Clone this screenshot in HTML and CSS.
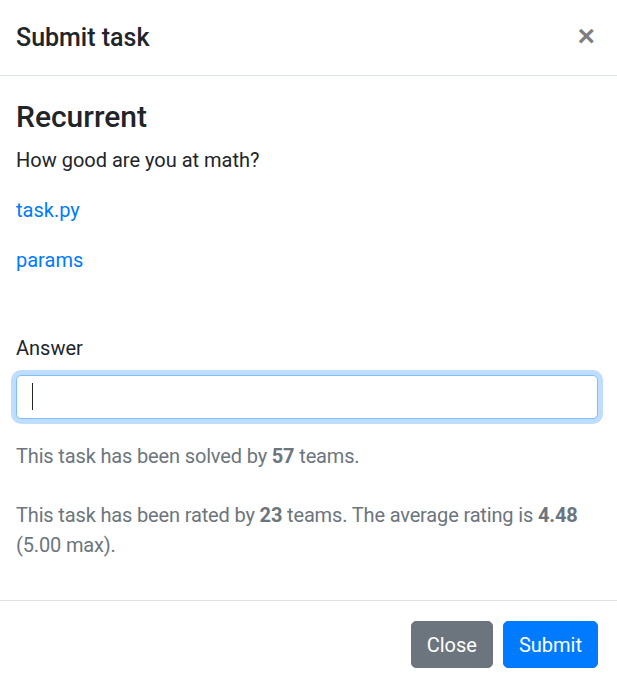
FILE: index.html
```html
<!DOCTYPE html>
<html lang="en">
<head>
<meta charset="utf-8">
<title>Submit task</title>
<link rel="stylesheet" href="styles.css">
</head>
<body>
<div class="modal">
  <div class="modal-header">
    <h5 class="modal-title">Submit task</h5>
    <button class="close" type="button" aria-label="Close">&times;</button>
  </div>
  <div class="modal-body">
    <h4 class="task-name">Recurrent</h4>
    <p>How good are you at math?</p>
    <p><a href="#">task.py</a></p>
    <p><a href="#">params</a></p>
    <div class="form-group">
      <label for="answer">Answer</label>
      <div class="input-wrap">
        <input id="answer" class="form-control" type="text">
        <span class="caret"></span>
      </div>
    </div>
    <p class="muted">This task has been solved by <b>57</b> teams.</p>
    <p class="muted rated">This task has been rated by <b>23</b> teams. The average rating is <b>4.48</b> (5.00 max).</p>
  </div>
  <div class="modal-footer">
    <button class="btn btn-secondary" type="button">Close</button>
    <button class="btn btn-primary" type="button">Submit</button>
  </div>
</div>
</body>
</html>
```
FILE: styles.css
```css
html, body {
  margin: 0;
  padding: 0;
  background: #fff;
}
body {
  font-family: Roboto, "Noto Sans", sans-serif;
  font-size: 20px;
  line-height: 1.5;
  color: #212529;
  width: 617px;
  overflow: hidden;
}
.modal {
  width: 617px;
}
.modal-header {
  display: flex;
  align-items: flex-start;
  justify-content: space-between;
  padding: 19px 22px 19px 16px;
  border-bottom: 1px solid #dee2e6;
}
.modal-title {
  margin: 0;
  font-size: 25px;
  font-weight: 500;
  line-height: 37px;
}
.close {
  background: none;
  border: 0;
  padding: 0;
  margin: 2px 0 0;
  font-family: "Liberation Sans", sans-serif;
  font-size: 30px;
  font-weight: 700;
  line-height: 1;
  color: #000;
  opacity: .5;
  cursor: pointer;
}
.modal-body {
  padding: 23px 20px 0 16px;
}
.task-name {
  margin: 0 0 10px;
  font-size: 30px;
  font-weight: 500;
  line-height: 36px;
}
p {
  margin: 0 0 20px;
}
a {
  color: #007bff;
  text-decoration: none;
}
.form-group {
  margin-top: 58px;
  margin-bottom: 22px;
}
label {
  display: block;
  margin-bottom: 12px;
}
.input-wrap {
  position: relative;
}
.form-control {
  display: block;
  box-sizing: border-box;
  width: 582px;
  height: 44px;
  padding: 6px 15px;
  font: inherit;
  border: 1px solid #80bdff;
  border-radius: 5px;
  box-shadow: 0 0 0 5px rgba(0, 123, 255, .25);
  outline: none;
  background: #fff;
}
.caret {
  position: absolute;
  left: 16px;
  top: 8px;
  width: 1px;
  height: 27px;
  background: #212529;
}
.muted {
  color: #6c757d;
  letter-spacing: -0.15px;
}
.muted b {
  font-weight: 700;
}
.rated {
  margin-top: 29px;
  margin-bottom: 0;
}
.modal-footer {
  display: flex;
  justify-content: flex-end;
  gap: 10px;
  padding: 20px 19px 20px 16px;
  margin-top: 40px;
  border-top: 1px solid #dee2e6;
}
.btn {
  font: inherit;
  color: #fff;
  border: 1px solid transparent;
  border-radius: 5px;
  padding: 7px 15px;
  line-height: 1.5;
  height: 47px;
  cursor: pointer;
}
.btn-secondary {
  background: #6c757d;
  border-color: #6c757d;
}
.btn-primary {
  background: #007bff;
  border-color: #007bff;
}
```
